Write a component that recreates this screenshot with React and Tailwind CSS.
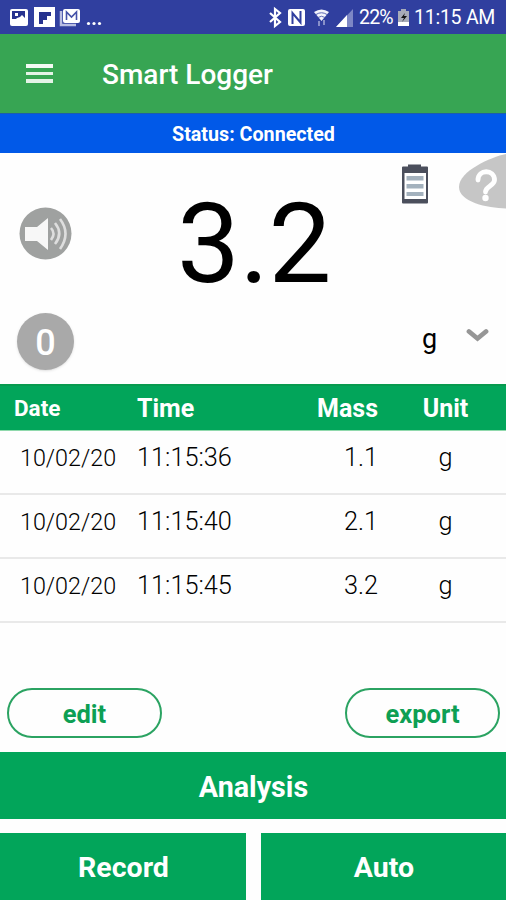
import React from 'react';

const records = [
  { date: '10/02/20', time: '11:15:36', mass: '1.1', unit: 'g' },
  { date: '10/02/20', time: '11:15:40', mass: '2.1', unit: 'g' },
  { date: '10/02/20', time: '11:15:45', mass: '3.2', unit: 'g' },
];

const App = () => {
  return (
    <div className="w-[506px] h-[900px] flex flex-col bg-[#fefefe] overflow-hidden font-['Roboto',sans-serif]">
      <SystemBar />

      {/* App bar */}
      <header className="h-[79px] shrink-0 flex items-center bg-[#37a553] text-white">
        <button className="ml-[26px] w-[27px] flex flex-col gap-[4px] pb-px" aria-label="Menu">
          <span className="h-[4px] bg-[#f3faf4]" />
          <span className="h-[3px] bg-[#e4f3e6]" />
          <span className="h-[4px] bg-[#e4f3e6]" />
        </button>
        <h1 className="ml-[49px] pt-[2px] text-[28px] leading-8 font-medium">Smart Logger</h1>
      </header>

      <div className="h-10 shrink-0 flex items-center justify-center bg-[#0159e8] border-t border-[#1d5da8] text-white text-[19.7px] font-bold pt-[2px] pl-px">
        Status: Connected
      </div>

      {/* Live reading */}
      <section className="h-[231px] shrink-0 flex">
        <div className="w-[91px] flex flex-col items-center pt-[54px]">
          <SpeakerIcon />
          <button className="mt-[53px] w-[57px] h-[57px] rounded-full bg-[#a9a9a9] text-white text-[36px] font-medium flex items-center justify-center pt-[3px] shadow-sm">
            0
          </button>
        </div>
        <div className="w-[326px] pl-[86px] pt-[24px] text-[112px] leading-[134px] tracking-[-0.5px] text-black whitespace-nowrap">3.2</div>
        <div className="flex-1 flex flex-col">
          <div className="flex -ml-[17px]">
            <BatteryIcon />
            <HelpIcon />
          </div>
          <div className="flex items-start gap-[28px] ml-[5px] mt-[112px]">
            <span className="text-[27px] leading-8 text-black">g</span>
            <svg width="24" height="20" viewBox="0 0 24 20" fill="none" stroke="#969696" strokeWidth="4.800">
              <path d="M4 8.500l8.500 7 8.500-7" strokeLinecap="round" />
            </svg>
          </div>
        </div>
      </section>

      {/* Records */}
      <div className="h-[47px] shrink-0 flex items-center bg-[#02a55a] border-t-2 border-b border-t-[#079a4e] border-b-[#8fd9ac] text-white text-[25px] font-bold pt-[2px]">
        <span className="w-[137px] shrink-0 pl-[14px] text-[22.5px]">Date</span>
        <span className="w-[130px] shrink-0">Time</span>
        <span className="w-[111px] shrink-0 text-right">Mass</span>
        <span className="w-[135px] shrink-0 text-center">Unit</span>
      </div>
      {records.map((r) => (
        <Row key={r.time} {...r} />
      ))}

      <div className="flex-1 flex items-end justify-between pl-[7px] pr-[6px] pb-[14px]">
        <PillButton label="edit" />
        <PillButton label="export" />
      </div>

      <button className="h-[67px] shrink-0 bg-[#02a55a] text-white text-[28.7px] font-bold pt-[4px] pl-px">Analysis</button>
      <div className="flex gap-[15px] mt-[14px] shrink-0">
        <button className="w-[246px] h-[67px] bg-[#02a55a] text-white text-[28.5px] font-bold pt-[4px] pl-px">Record</button>
        <button className="w-[245px] h-[67px] bg-[#02a55a] text-white text-[28.5px] font-bold pt-[4px] pl-px">Auto</button>
      </div>
    </div>
  );
};

// Helper Components
const Row = ({ date, time, mass, unit }) => (
  <div className="h-[64px] shrink-0 flex items-center border-b-2 border-[#e9e9e9] pb-[9px] text-[25.3px] font-light text-black">
    <span className="w-[137px] shrink-0 pl-[20px] pt-[2px] text-[23.3px]">{date}</span>
    <span className="w-[130px] shrink-0">{time}</span>
    <span className="w-[111px] shrink-0 text-right">{mass}</span>
    <span className="w-[135px] shrink-0 text-center">{unit}</span>
  </div>
);

const PillButton = ({ label }) => (
  <button className="w-[155px] h-[50px] rounded-full border-2 border-[#2ba362] text-[#0d9f54] text-[25.5px] font-bold pt-[2px]">
    {label}
  </button>
);

const SystemBar = () => (
  <div className="h-[34px] shrink-0 flex items-center bg-[#303f9f] text-white text-[19.5px]">
    <svg className="ml-[8px] shrink-0" width="94" height="34" viewBox="0 0 94 34">
      {/* gallery */}
      <rect x="2" y="9" width="18" height="17" rx="2" fill="#fff" />
      <path d="M4 11h13v7l-3-3-2 2-3 1-1 1H4z" fill="#27338f" />
      <path d="M7 13h3v3H7z" fill="#fff" />
      {/* flipboard */}
      <rect x="26" y="7" width="21" height="20" fill="#fff" />
      <path d="M31 12h12v4h-4v4h-4v4h-4z" fill="#27338f" />
      {/* mail */}
      <path d="M53 11v14h15" fill="none" stroke="#b9bee2" strokeWidth="2.500" />
      <rect x="55" y="9" width="17" height="14" rx="2" fill="#fff" />
      <path d="M58.500 20v-8l5 5 5-5v8" fill="none" stroke="#4451a8" strokeWidth="1.600" />
      <circle cx="80.500" cy="23.500" r="1.600" fill="#fff" />
      <circle cx="86" cy="23.500" r="1.600" fill="#fff" />
      <circle cx="91.500" cy="23.500" r="1.600" fill="#fff" />
    </svg>
    <svg className="ml-[166px] shrink-0" width="86" height="34" viewBox="0 0 86 34">
      {/* bluetooth */}
      <path d="M2 13l10 9-5 4V9l5 4-10 9" fill="none" stroke="#fff" strokeWidth="2.200" />
      {/* nfc */}
      <rect x="20" y="9" width="17" height="17" rx="2" fill="#fff" />
      <path d="M24.500 24V13l8 9.500V11" fill="none" stroke="#303f9f" strokeWidth="2" />
      {/* wifi */}
      <path d="M46 12q7.500-5 15 0l-7.500 9z" fill="#f4f5fb" />
      <path d="M48 14.500q5.500-3.500 11 0M50 17.500q3.500-2.500 7 0" fill="none" stroke="#5a67b5" strokeWidth="1" />
      <path d="M51 21v5M56 20v5" stroke="#a5acd8" strokeWidth="1.500" />
      {/* signal */}
      <path d="M68 27L85 9v18z" fill="#7d87c5" />
      <path d="M68 27l11-12v12z" fill="#fff" />
    </svg>
    <span className="ml-[5px] w-[38px] shrink-0 pt-[2px] tracking-[-0.8px]">22%</span>
    <svg className="shrink-0" width="13" height="19" viewBox="0 0 13 19">
      <path d="M4 1h5v2h3v15H1V3h3z" fill="#a7abb8" />
      <path d="M1 14h11v4H1z" fill="#fff" />
      <path d="M8 5L4 10h3l-2 4 5-6H7z" fill="#111" />
    </svg>
    <span className="ml-[4px] pt-[2px] whitespace-nowrap tracking-[-0.25px]">11:15 AM</span>
  </div>
);

const SpeakerIcon = () => (
  <svg width="53" height="53" viewBox="0 0 53 53" className="shrink-0">
    <circle cx="26.500" cy="26.500" r="26" fill="#9fa1a0" />
    <path d="M6 20h12l11-9v32L18 34H6z" fill="#f7f7f7" />
    <g fill="none" stroke="#dedede" strokeWidth="2.600">
      <path d="M32 21q5 5.500 0 12" />
      <path d="M36 16q8.500 10.500 0 21" />
      <path d="M41 12q11 14.500 0 30" />
    </g>
  </svg>
);

const BatteryIcon = () => (
  <svg width="30" height="58" viewBox="400 153 30 58" className="shrink-0">
    <path d="M402 167.500q0-1 1-1h5v-2h13v2h6q1 0 1 1v35q0 1-1 1h-24q-1 0-1-1z" fill="#4b4f5c" />
    <path d="M404.500 173h21.500v26h-21.500z" fill="#fff" />
    <path d="M406.500 176h17v4.500h-17zM406.500 184h17v4.500h-17zM406.500 192h17v4h-17z" fill="#a3b1bd" />
  </svg>
);

const HelpIcon = () => (
  <svg width="76" height="58" viewBox="430 153 76 58" className="shrink-0">
    <path d="M506 154c-15 3-47 17-47 33 0 15 28 21 47 21.500z" fill="#c6c6c6" />
    <path d="M478 180c0-11 16.500-11 16.500 0 0 6-9 6-9 12" fill="none" stroke="#fff" strokeWidth="4.800" strokeLinecap="round" />
    <circle cx="485.500" cy="198" r="3.200" fill="#fff" />
  </svg>
);

export default App;
